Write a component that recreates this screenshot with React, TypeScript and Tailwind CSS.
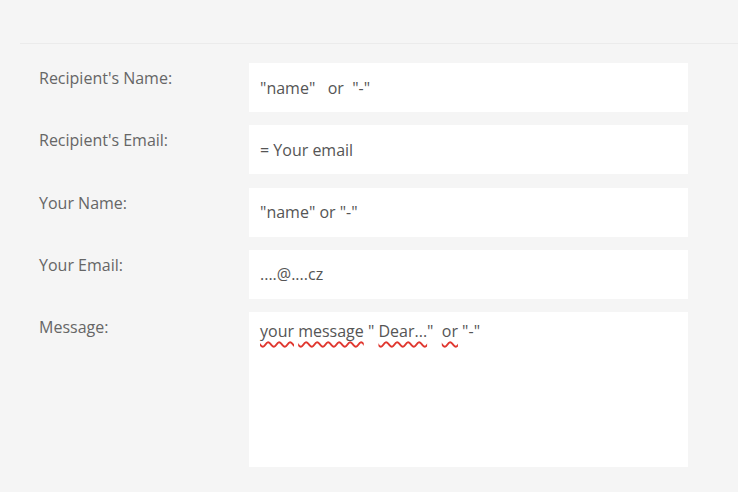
import React from "react";

const font = { fontFamily: '"Open Sans", "Liberation Sans", sans-serif' };

function Wavy({ children }: { children: React.ReactNode }) {
  return (
    <span className="underline decoration-wavy decoration-[#e0372f] decoration-[1.5px] underline-offset-[4px]">
      {children}
    </span>
  );
}

function Row({
  label,
  value,
  tall = false
}: {
  label: string;
  value: React.ReactNode;
  tall?: boolean;
}) {
  return (
    <div className="flex">
      <div className="w-[210px] shrink-0 pt-[4px] text-[16px] leading-[22px] text-[#666]">
        {label}
      </div>
      <div
        className={`w-[439px] bg-white px-[11px] text-[16px] text-[#555] whitespace-pre ${
          tall ? "h-[155px] pt-[7px] leading-[24px]" : "flex h-[49px] items-center"
        }`}
      >
        {value}
      </div>
    </div>
  );
}

export default function App() {
  return (
    <div className="h-[492px] w-[738px] overflow-hidden bg-[#f5f5f5]" style={font}>
      <div className="pl-5 pt-[43px]">
        <div className="border-t border-[#ebebeb]" />
        <div className="flex flex-col gap-[13.25px] pl-[19px] pt-[19px]">
          <Row label="Recipient's Name:" value={'"name"   or  "-"'} />
          <Row label="Recipient's Email:" value="= Your email" />
          <Row label="Your Name:" value={'"name" or "-"'} />
          <Row label="Your Email:" value="....@....cz" />
          <Row
            label="Message:"
            tall
            value={
              <>
                <Wavy>your</Wavy> <Wavy>message</Wavy> " <Wavy>Dear...</Wavy>"  <Wavy>or</Wavy> "-"
              </>
            }
          />
        </div>
      </div>
    </div>
  );
}
